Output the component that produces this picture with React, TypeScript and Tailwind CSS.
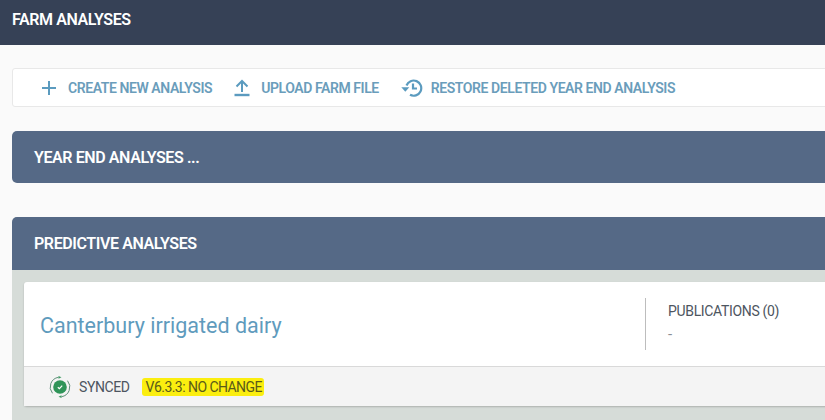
import React from "react";

function PlusIcon() {
  return (
    <svg width="16" height="16" viewBox="0 0 16 16" fill="none" stroke="#5b9bbf" strokeWidth="2">
      <path d="M8 1v14M1 8h14" />
    </svg>
  );
}

function UploadIcon() {
  return (
    <svg width="16" height="18" viewBox="0 0 16 18" fill="none" stroke="#5b9bbf" strokeWidth="2">
      <path d="M8 13V2M2.500 7.500L8 2l5.500 5.500" />
      <path d="M0.500 16h15" strokeWidth="2.400" />
    </svg>
  );
}

function RestoreIcon() {
  return (
    <svg width="22" height="18" viewBox="0 0 22 18" fill="none">
      <path d="M5.500 6.500A7.600 7.600 0 1 1 9 15.800" stroke="#5b9bbf" strokeWidth="2.200" />
      <path d="M0.300 8.300h8l-4 4.500z" fill="#5b9bbf" />
      <path d="M12 4.500v5h4" stroke="#5b9bbf" strokeWidth="2.200" />
    </svg>
  );
}

function SyncedIcon() {
  return (
    <svg width="22" height="22" viewBox="0 0 22 22" fill="none">
      <path d="M9.500 1.300A9.800 9.800 0 0 0 3.500 17.300M12.500 20.700A9.800 9.800 0 0 0 18.500 4.700" stroke="#5f8f78" strokeWidth="1" />
      <path d="M9.500 0l3 1.300-3 1.500zM12.500 19.200l-3 1.500 3 1.300z" fill="#3f9a63" />
      <circle cx="11" cy="11" r="6.800" fill="#2f9458" />
      <path d="M8.800 11.200l1.600 1.500 2.800-3" stroke="#fff" strokeWidth="1.200" />
    </svg>
  );
}

function ActionLink(props: { icon: React.ReactNode; label: string; className: string }) {
  return (
    <div className={"flex items-center " + props.className}>
      {props.icon}
      <span className="pt-[2px] text-[14px] tracking-[-0.42px] font-semibold text-[#6a9dbb] whitespace-nowrap">{props.label}</span>
    </div>
  );
}

export default function App() {
  return (
    <div className="w-[825px] h-[420px] overflow-hidden bg-[#fafafa]">
      <div className="w-[860px] font-['Roboto',sans-serif]">
        <div className="h-[45px] bg-[#364156] flex items-center px-3 pb-[5px] text-[16px] tracking-[-0.4px] font-semibold text-white">
          FARM ANALYSES
        </div>

        <div className="pl-3 pt-[23px]">
          <div className="h-[39px] bg-white border border-[#e8e8e8] rounded-l-[3px] flex items-center pl-[28px] gap-[22px]">
            <ActionLink icon={<PlusIcon />} label="CREATE NEW ANALYSIS" className="gap-[11px]" />
            <ActionLink icon={<UploadIcon />} label="UPLOAD FARM FILE" className="gap-[11px]" />
            <ActionLink icon={<RestoreIcon />} label="RESTORE DELETED YEAR END ANALYSIS" className="gap-[8px]" />
          </div>

          <div className="mt-6 h-[52px] bg-[#556986] rounded-l-[5px] flex items-center pl-[22px] pt-[2px] text-[16px] tracking-[-0.4px] font-semibold text-white">
            YEAR END ANALYSES ...
          </div>

          <div className="mt-[34px] bg-[#d6dcd8] rounded-l-[5px] h-[210px]">
            <div className="h-[53px] bg-[#556986] rounded-tl-[5px] flex items-center pl-[22px] text-[16px] tracking-[-0.4px] font-semibold text-white">
              PREDICTIVE ANALYSES
            </div>
            <div className="ml-3 mt-3 bg-white rounded-l-[3px] shadow-[0_1px_2px_rgba(0,0,0,0.2)]">
              <div className="h-[84px] flex items-center">
                <div className="w-[621px] pl-4 pt-1 text-[21.500px] text-[#5f9bbd]">Canterbury irrigated dairy</div>
                <div className="h-[52px] border-l border-[#bdbdbd] pl-[22px] pt-[3px]">
                  <div className="text-[14px] tracking-[-0.33px] text-[#4d5560] whitespace-nowrap">PUBLICATIONS (0)</div>
                  <div className="text-[15px] text-[#8a8f94] mt-[1px]">-</div>
                </div>
              </div>
              <div className="h-10 bg-[#f4f4f4] border-t border-[#d9d9d9] flex items-center pl-[25px] text-[14px] tracking-[-0.4px]">
                <SyncedIcon />
                <span className="ml-[8px] pt-[1px] text-[#4d5560]">SYNCED</span>
                <span className="ml-[12px] pl-1 pr-[2px] h-[18px] leading-[19px] bg-[#fbee0f] text-[#5a5a1a] rounded-[3px] whitespace-nowrap tracking-[-0.55px]">V6.3.3: NO CHANGE</span>
              </div>
            </div>
          </div>
        </div>
      </div>
    </div>
  );
}
